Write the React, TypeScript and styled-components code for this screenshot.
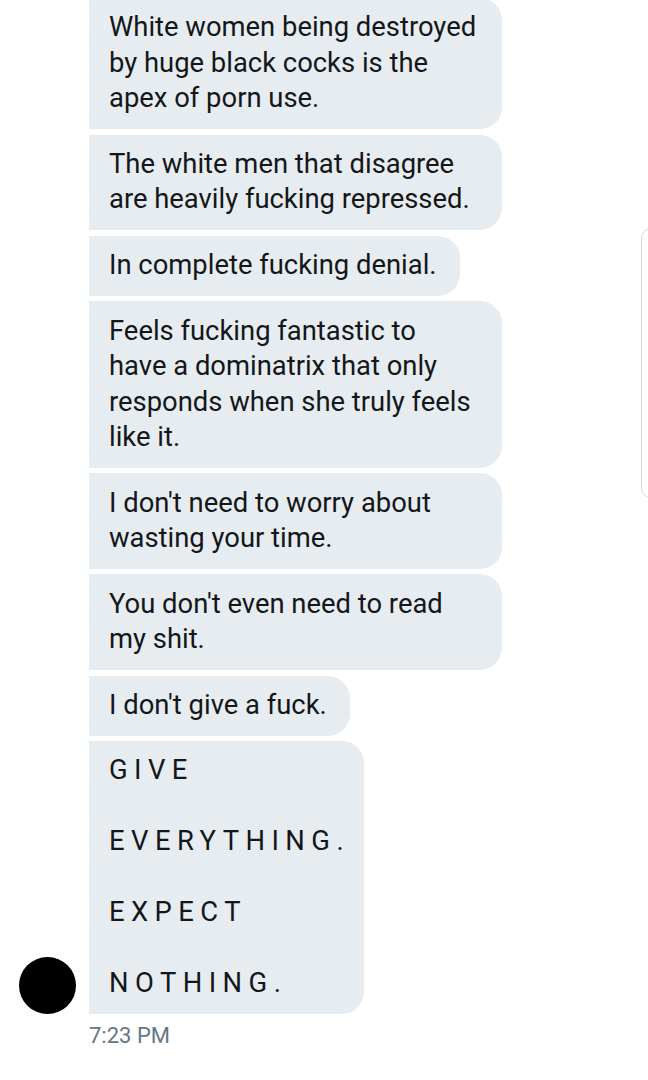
import React from "react";
import styled, { createGlobalStyle } from "styled-components";

const Global = createGlobalStyle`
  html, body { margin: 0; padding: 0; background: #ffffff; }
  body { font-family: Roboto, "Noto Sans", "Liberation Sans", sans-serif; }
`;

const Page = styled.div`
  position: relative;
  width: 648px;
  height: 1080px;
  overflow: hidden;
  background: #ffffff;
`;

const Thread = styled.div`
  display: flex;
  flex-direction: column;
  margin-top: -2px;
`;

const Group = styled.div`
  display: flex;
  align-items: flex-end;
`;

const AvatarCol = styled.div`
  width: 89px;
  flex: none;
  display: flex;
  justify-content: flex-start;
  padding-left: 19px;
  box-sizing: border-box;
`;

const Avatar = styled.div`
  width: 57px;
  height: 57px;
  border-radius: 50%;
  background: #000000;
`;

const Bubbles = styled.div`
  display: flex;
  flex-direction: column;
  align-items: flex-start;
  gap: 5.6px;
`;

const Bubble = styled.div<{ $spaced?: boolean }>`
  max-width: 413px;
  box-sizing: border-box;
  padding: 12.25px ${(p) => (p.$spaced ? "14px" : "23px")} 12.25px 20px;
  background: #e6ecf0;
  color: #14171a;
  font-size: 27.4px;
  line-height: 35.5px;
  border-radius: 0 22px 22px 0;
  white-space: pre-wrap;
  letter-spacing: ${(p) => (p.$spaced ? "0.235em" : "0")};
`;

const Time = styled.div`
  margin: 9px 0 0 89px;
  font-size: 22px;
  color: #657786;
`;

const EdgePanel = styled.div`
  position: absolute;
  left: 641px;
  top: 228px;
  width: 30px;
  height: 268px;
  border: 1px solid #d6d6d6;
  border-radius: 10px;
  background: #ffffff;
`;

const messages = [
  "White women being destroyed by huge black cocks is the apex of porn use.",
  "The white men that disagree are heavily fucking repressed.",
  "In complete fucking denial.",
  "Feels fucking fantastic to have a dominatrix that only responds when she truly feels like it.",
  "I don't need to worry about wasting your time.",
  "You don't even need to read my shit.",
  "I don't give a fuck.",
];

export default function App() {
  return (
    <Page>
      <Global />
      <Thread>
        <Group>
          <AvatarCol>
            <Avatar />
          </AvatarCol>
          <Bubbles>
            {messages.map((m, i) => (
              <Bubble key={i}>{m}</Bubble>
            ))}
            <Bubble $spaced>{"GIVE\n\nEVERYTHING.\n\nEXPECT\n\nNOTHING."}</Bubble>
          </Bubbles>
        </Group>
        <Time>7:23 PM</Time>
      </Thread>
      <EdgePanel />
    </Page>
  );
}
